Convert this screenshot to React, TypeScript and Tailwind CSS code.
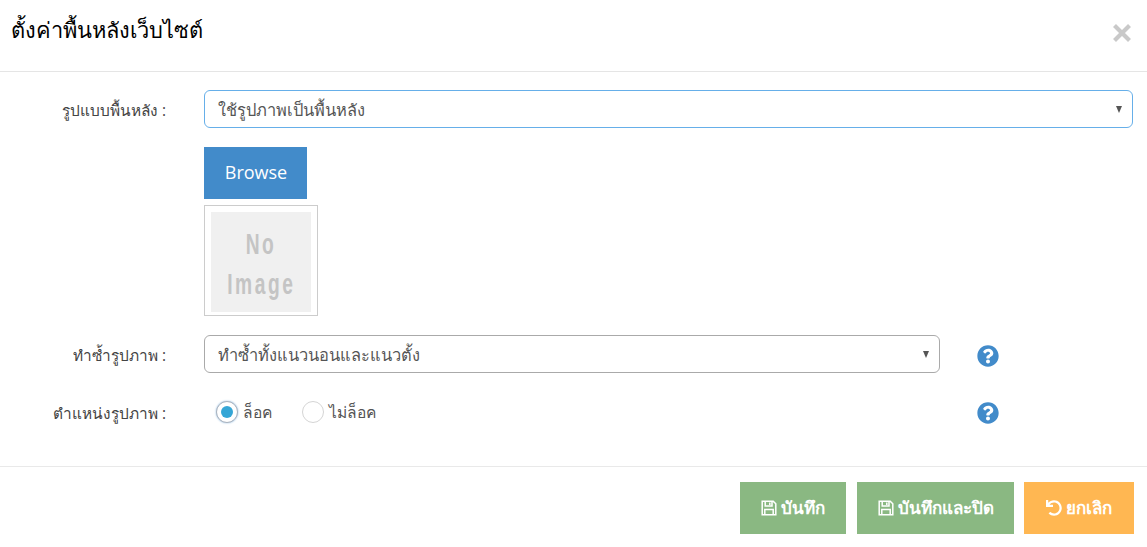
import { FaQuestionCircle, FaUndo } from "react-icons/fa";

const font = "font-['Open_Sans','Noto_Sans',sans-serif]";

function SelectBox({ value, className }: { value: string; className: string }) {
  return (
    <div className={`relative h-[38px] ${className}`}>
      <div className="flex h-full items-center rounded-[6px] border border-inherit pl-[13px] pt-[2px] text-[16.4px] text-[#555]">
        {value}
      </div>
      <span className="absolute right-[11px] top-[16px] h-0 w-0 border-x-[3.5px] border-t-[7px] border-x-transparent border-t-[#555]" />
    </div>
  );
}

function Label({ children }: { children: string }) {
  return <label className="w-[166px] shrink-0 pt-[4px] text-right text-[15.4px] text-[#444]">{children}</label>;
}

function Radio({ label, checked }: { label: string; checked?: boolean }) {
  return (
    <div className="flex items-center gap-[5px]">
      <span
        className={`flex h-[22px] w-[22px] items-center justify-center rounded-full border bg-white ${
          checked ? "border-[#aab2bd] shadow-[0_0_2px_#8fb8dd]" : "border-[#d5d5d5]"
        }`}
      >
        {checked && <span className="h-[12px] w-[12px] rounded-full bg-[#35a6d6]" />}
      </span>
      <span className="pt-[2px] text-[15.6px] text-[#555]">{label}</span>
    </div>
  );
}

function SaveIcon() {
  return (
    <svg viewBox="0 0 16 16" className="h-[16px] w-[16px]" fill="none" stroke="currentColor" strokeWidth="1.5">
      <path d="M1.2 1.2H12.2L14.8 3.8V14.8H1.2Z" />
      <path d="M4.2 1.5V6H11V1.5M3.8 14.5V9.4H12.2V14.5" />
      <path d="M8.8 2.4V5" />
    </svg>
  );
}

function FooterButton({ icon, label, className }: { icon: React.ReactNode; label: string; className: string }) {
  return (
    <button className={`flex h-[52px] items-center justify-center gap-[4px] text-[17px] font-semibold text-white ${className}`}>
      {icon}
      {label}
    </button>
  );
}

export default function App() {
  return (
    <div className={`h-[547px] w-[1147px] overflow-hidden bg-white ${font}`}>
      <header className="flex h-[72px] items-start justify-between border-b border-[#e5e5e5] pl-[11px] pr-[15px]">
        <h4 className="pt-[15px] text-[21.8px] leading-[30px] text-black">ตั้งค่าพื้นหลังเว็บไซต์</h4>
        <svg viewBox="0 0 20 20" className="mt-[23px] h-[20px] w-[20px]">
          <path d="M2.5 2.5 17.5 17.5M17.5 2.5 2.5 17.5" stroke="#c9c9c9" strokeWidth="4.2" />
        </svg>
      </header>

      <main className="h-[395px] border-b border-[#e9e9e9] pt-[18px]">
        <div className="flex items-center gap-[38px] pr-[14px]">
          <Label>รูปแบบพื้นหลัง :</Label>
          <SelectBox value="ใช้รูปภาพเป็นพื้นหลัง" className="flex-1 border-[#66afe9]" />
        </div>

        <div className="ml-[204px] mt-[19px] flex flex-col items-start gap-[6px]">
          <button className="h-[52px] w-[103px] bg-[#428bca] pb-[2px] pl-[1px] text-[18px] text-white">Browse</button>
          <div className="h-[111px] w-[114px] border border-[#ccc] p-[6px]">
            <div className="flex h-[100px] w-[100px] flex-col items-center justify-center bg-[#f0f0f0] pt-[3px] font-['Liberation_Sans',sans-serif] text-[30px] font-bold leading-[40px] tracking-[4px] text-[#c4c4c4]">
              <span className="scale-x-[0.64]">No</span>
              <span className="scale-x-[0.64]">Image</span>
            </div>
          </div>
        </div>

        <div className="mt-[19px] flex items-center">
          <Label>ทำซ้ำรูปภาพ :</Label>
          <SelectBox value="ทำซ้ำทั้งแนวนอนและแนวตั้ง" className="ml-[38px] w-[736px] border-[#aaa]" />
          <FaQuestionCircle className="ml-[37px] mt-[4px] text-[22px] text-[#428bca]" />
        </div>

        <div className="mt-[28px] flex h-[22px] items-center">
          <Label>ตำแหน่งรูปภาพ :</Label>
          <div className="ml-[50px] flex w-[724px] gap-[30px]">
            <Radio label="ล็อค" checked />
            <Radio label="ไม่ล็อค" />
          </div>
          <FaQuestionCircle className="ml-[37px] mt-[2px] text-[22px] text-[#428bca]" />
        </div>
      </main>

      <footer className="flex justify-end pr-[13px] pt-[15px]">
        <FooterButton icon={<SaveIcon />} label="บันทึก" className="w-[106px] bg-[#8ab882]" />
        <FooterButton icon={<SaveIcon />} label="บันทึกและปิด" className="ml-[11px] w-[157px] bg-[#8ab882]" />
        <FooterButton icon={<FaUndo className="text-[16px]" />} label="ยกเลิก" className="ml-[10px] w-[110px] bg-[#ffb752]" />
      </footer>
    </div>
  );
}
